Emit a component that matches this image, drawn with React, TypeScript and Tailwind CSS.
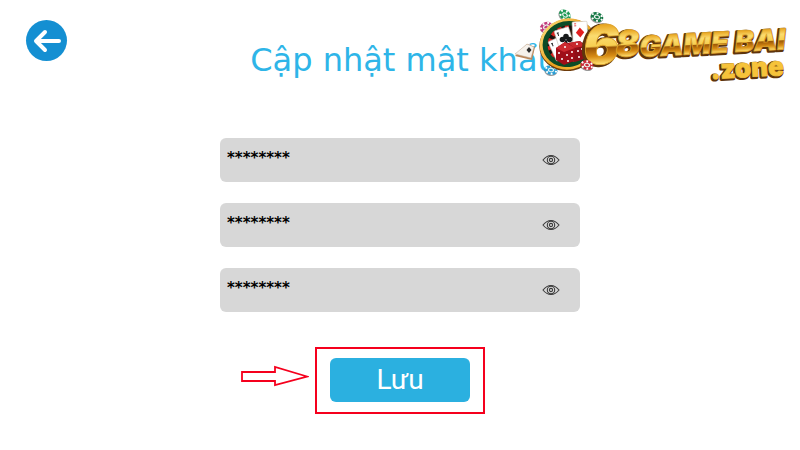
import { useState } from 'react';

const FIELDS = [
  { id: 'current', label: 'Mật khẩu hiện tại' },
  { id: 'next', label: 'Mật khẩu mới' },
  { id: 'confirm', label: 'Nhập lại mật khẩu mới' },
];

function EyeIcon() {
  return (
    <svg viewBox="0 0 18 12" className="h-3 w-[18px]" fill="none" stroke="#3a3a3a" strokeWidth="1.1">
      <path d="M1 6C3.5 2.9 6 1.5 9 1.5S14.5 2.9 17 6C14.5 9.1 12 10.5 9 10.5S3.5 9.1 1 6Z" />
      <circle cx="9" cy="6" r="3.7" />
      <circle cx="9" cy="6" r="1.6" />
    </svg>
  );
}

function Chip({ x, y, color, angle = 0 }: { x: number; y: number; color: string; angle?: number }) {
  return (
    <g transform={`translate(${x} ${y}) rotate(${angle})`}>
      <ellipse cy="1.2" rx="6.5" ry="4.8" fill="#333" opacity="0.5" />
      <ellipse rx="6.5" ry="4.8" fill={color} />
      <ellipse rx="5.3" ry="3.7" fill="none" stroke="#fff" strokeWidth="2" strokeDasharray="1.8 3" />
      <ellipse rx="3.2" ry="2.2" fill="#e9f3ee" />
      <ellipse rx="1.9" ry="1.2" fill={color} />
    </g>
  );
}

function Card({ x, y, angle, children }: { x: number; y: number; angle: number; children?: React.ReactNode }) {
  return (
    <g transform={`translate(${x} ${y}) rotate(${angle})`}>
      <rect width="15" height="21" rx="1" fill="#fff" stroke="#c9c2b8" strokeWidth="0.6" />
      {children}
    </g>
  );
}

function Logo() {
  return (
    <svg viewBox="0 0 288 92" className="w-72" role="img" aria-label="68 Game Bai .zone">
      <defs>
        <linearGradient id="gold" x1="0" y1="0" x2="0" y2="1">
          <stop offset="0.2" stopColor="#e9a51f" />
          <stop offset="0.36" stopColor="#fbdc70" />
          <stop offset="0.52" stopColor="#f7cf50" />
          <stop offset="0.55" stopColor="#9c5706" />
          <stop offset="0.68" stopColor="#d98d14" />
          <stop offset="0.8" stopColor="#ffe171" />
        </linearGradient>
        <linearGradient id="rim" x1="0" y1="0" x2="1" y2="1">
          <stop offset="0" stopColor="#ffe68a" />
          <stop offset="0.5" stopColor="#e9a01f" />
          <stop offset="1" stopColor="#ffcf4a" />
        </linearGradient>
      </defs>

      <Chip x={53} y={15} color="#1d9955" angle={40} />
      <Chip x={85} y={17} color="#167846" angle={20} />
      <Chip x={34} y={27} color="#c23b7c" angle={-30} />
      <Chip x={39} y={70} color="#2b9fd6" angle={10} />

      {/* roulette wheel */}
      <g transform="rotate(-12 56 44)">
        <ellipse cx="56" cy="45" rx="29" ry="26" fill="#6d3b0a" />
        <ellipse cx="56" cy="44" rx="28.5" ry="25.5" fill="url(#rim)" />
        <ellipse cx="56" cy="44" rx="25.5" ry="23" fill="#0c4b26" />
        <ellipse cx="56" cy="44" rx="20.5" ry="18.5" fill="#17110e" />
        <ellipse cx="56" cy="44" rx="18.5" ry="16.5" fill="none" stroke="#d92520" strokeWidth="4" strokeDasharray="4 3.5" />
        <ellipse cx="56" cy="44" rx="16" ry="14" fill="#3c2417" />
      </g>
      <Card x={36} y={42} angle={-24}>
        <path d="M2 3h2M3 3v3" stroke="#222" strokeWidth="0.9" />
      </Card>
      <Card x={42} y={31} angle={-17}>
        <path d="M2 3h2M3 3v3" stroke="#222" strokeWidth="1" />
      </Card>
      <Card x={60} y={22} angle={-3}>
        <path d="M7.5 6l4.2 5-4.2 5-4.2-5Z" fill="#e32020" />
        <path d="M2 2h2M2 4h2M11 18h2" stroke="#e32020" strokeWidth="0.8" />
      </Card>
      <g fill="#17191a">
        <circle cx="54" cy="36.5" r="2.8" />
        <circle cx="50.5" cy="39.5" r="2.8" />
        <circle cx="57.5" cy="39.5" r="2.8" />
        <path d="M54 38l2 6h-4Z" />
      </g>

      {/* dice */}
      <path d="M56 43l12-2 5 5-1 13-9 3-8-4Z" fill="#8f0f18" />
      <path d="M56 43l12-2 5 5-11 2Z" fill="#c8282d" />
      <path d="M44 48l9-6 10 6-1 13-10 4-8-5Z" fill="#a00f19" />
      <path d="M44 48l9-6 10 6-11 4Z" fill="#cc2a30" />
      <g fill="#fff">
        <circle cx="53" cy="47" r="1" />
        <circle cx="47" cy="53" r="1" />
        <circle cx="50" cy="59" r="1" />
        <circle cx="55" cy="55" r="1" />
        <circle cx="60" cy="52" r="1" />
        <circle cx="56" cy="61" r="1" />
        <circle cx="60" cy="58" r="1" />
        <circle cx="65" cy="44" r="1" />
        <circle cx="66" cy="51" r="1" />
        <circle cx="70" cy="49" r="1" />
        <circle cx="67" cy="57" r="1" />
      </g>

      {/* flying ace */}
      <path d="M3 56L15 44l8 3-3 13Z" fill="#b98558" />
      <path d="M3 54L15 44l7 3-3 11Z" fill="#f6f1eb" stroke="#bfa78f" strokeWidth="0.5" />
      <path d="M17 47l2.5 3-2.5 3-2.5-3Z" fill="#2a2a2a" />

      <g fontFamily="Inter, 'Open Sans', sans-serif" fontWeight="900" fontStyle="italic" strokeLinejoin="round">
        <g fill="#5f350b" stroke="#5f350b" strokeWidth="3">
          <text x="70" y="66" fontSize="54" transform="rotate(-3 70 66)">6</text>
          <text x="103" y="58" fontSize="36" transform="rotate(-3 103 58)">8</text>
          <text x="127" y="58" fontSize="29" transform="rotate(-3 127 58)">GAME BAI</text>
          <text x="198" y="80" fontSize="26" transform="rotate(-3 198 80)" fontStyle="normal">.zone</text>
        </g>
        <g fill="url(#gold)" stroke="#e0a52c" strokeWidth="0.8">
          <text x="72" y="65" fontSize="54" transform="rotate(-3 72 65)">6</text>
          <text x="104" y="57" fontSize="36" transform="rotate(-3 104 57)">8</text>
          <text x="128" y="57" fontSize="29" transform="rotate(-3 128 57)">GAME BAI</text>
        </g>
        <text x="199" y="79" fontSize="26" fill="#f6c33a" stroke="#f6c33a" strokeWidth="0.8" transform="rotate(-3 199 79)" fontStyle="normal">.zone</text>
      </g>
      <Chip x={75} y={65} color="#c92c3a" angle={15} />
    </svg>
  );
}

export default function App() {
  const [values, setValues] = useState<Record<string, string>>({
    current: '********',
    next: '********',
    confirm: '********',
  });

  const handleChange = (id: string, value: string) => {
    setValues((prev) => ({ ...prev, [id]: value }));
  };

  return (
    <div className="relative min-h-screen bg-white pb-9 font-['DejaVu_Sans',sans-serif]">
      <header className="grid grid-cols-[1fr_auto_1fr] px-6 pt-5">
        <button type="button" aria-label="Quay lại" className="ml-0.5 flex size-[41px] items-center justify-center rounded-full bg-[#148fd2]">
          <svg viewBox="0 0 28 24" className="h-6 w-7" fill="none" stroke="#fff" strokeWidth="4" strokeLinecap="round" strokeLinejoin="round">
            <path d="M12 3L3 12l9 9M3.5 12H26" />
          </svg>
        </button>
        <h1 className="pt-5 pl-2 text-[32px] leading-10 whitespace-nowrap text-[#2eb5e8]">Cập nhật mật khẩu</h1>
      </header>

      <div className="absolute top-0 right-0">
        <Logo />
      </div>

      <form onSubmit={(e) => e.preventDefault()} className="px-6 pt-[58px]">
        <div className="mx-auto flex max-w-[360px] flex-col gap-[21px]">
          {FIELDS.map((field) => (
            <div key={field.id} className="flex h-11 items-center rounded-md bg-[#d7d7d7] pr-5 pl-[7px]">
              <input
                id={field.id}
                type="text"
                aria-label={field.label}
                autoComplete="off"
                value={values[field.id]}
                onChange={(e) => handleChange(field.id, e.target.value)}
                className="h-full min-w-0 flex-1 bg-transparent pb-1 text-[15px] font-bold text-black outline-none"
              />
              <button type="button" aria-label="Hiện mật khẩu">
                <EyeIcon />
              </button>
            </div>
          ))}
        </div>

        <div className="mt-[35px] grid grid-cols-[1fr_auto_1fr] items-center gap-1.5">
          <svg viewBox="0 0 68 22" className="mb-2.5 w-[68px] justify-self-end" fill="none" stroke="#f5001d" strokeWidth="1.8">
            <path d="M1 7h33V2l32 9.5L34 20v-4H1Z" />
          </svg>
          <div className="border-2 border-[#f5001d] px-[13px] pt-[9px] pb-2.5">
            <button type="submit" className="h-11 w-[140px] rounded-md bg-[#2bb0e0] font-['Roboto',sans-serif] text-[28px] text-white">
              Lưu
            </button>
          </div>
        </div>
      </form>
    </div>
  );
}
